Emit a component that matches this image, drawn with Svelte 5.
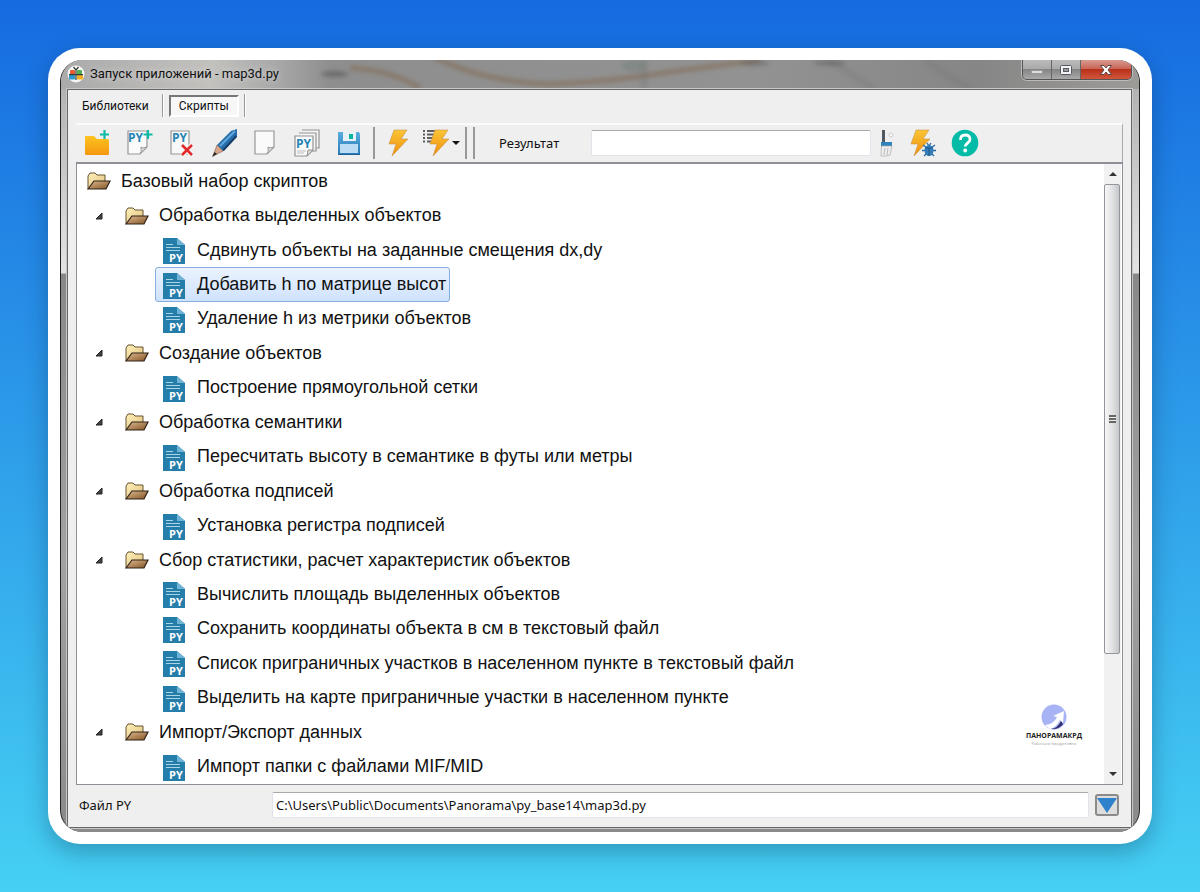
<script lang="ts">
    type Row = { level: number; label: string };

    const rows: Row[] = [
        { level: 0, label: "Базовый набор скриптов" },
        { level: 1, label: "Обработка выделенных объектов" },
        { level: 2, label: "Сдвинуть объекты на заданные смещения dx,dy" },
        { level: 2, label: "Добавить h по матрице высот" },
        { level: 2, label: "Удаление h из метрики объектов" },
        { level: 1, label: "Создание объектов" },
        { level: 2, label: "Построение прямоугольной сетки" },
        { level: 1, label: "Обработка семантики" },
        { level: 2, label: "Пересчитать высоту в семантике в футы или метры" },
        { level: 1, label: "Обработка подписей" },
        { level: 2, label: "Установка регистра подписей" },
        { level: 1, label: "Сбор статистики, расчет характеристик объектов" },
        { level: 2, label: "Вычислить площадь выделенных объектов" },
        { level: 2, label: "Сохранить координаты объекта в см в текстовый файл" },
        { level: 2, label: "Список приграничных участков в населенном пункте в текстовый файл" },
        { level: 2, label: "Выделить на карте приграничные участки в населенном пункте" },
        { level: 1, label: "Импорт/Экспорт данных" },
        { level: 2, label: "Импорт папки с файлами MIF/MID" }
    ];

    let selected = $state(3);
    let tab = $state("scripts");
    let result = $state("");
    let path = $state("C:\\Users\\Public\\Documents\\Panorama\\py_base14\\map3d.py");
</script>

{#snippet bolt()}
    <path d="M9 1h13l-6 9h7L7 27l4-12H4z" fill="url(#boltFill)" stroke="#c9964a" stroke-width=".6" />
{/snippet}

{#snippet page()}
    <path d="M3 2h19v16l-7 7H3z" fill="#fafafa" stroke="#979797" stroke-width="1.2" />
    <path d="M22 18q-5 2-6 0q1 5-1 7z" fill="#ddd" stroke="#979797" />
{/snippet}

<!-- shared gradients -->
<svg class="defs" aria-hidden="true">
    <defs>
        <linearGradient id="boltFill" x1="0" y1="0" x2="0" y2="1"><stop offset="0" stop-color="#fbc536" /><stop offset="1" stop-color="#ef8d0b" /></linearGradient>
        <linearGradient id="folderFill" x1="0" y1="0" x2="0" y2="1"><stop offset="0" stop-color="#fcc421" /><stop offset="1" stop-color="#f5970f" /></linearGradient>
        <linearGradient id="backFill" x1="0" y1="0" x2="1" y2="1"><stop offset="0" stop-color="#fff0bb" /><stop offset="1" stop-color="#dfc17c" /></linearGradient>
        <linearGradient id="flapFill" x1="0" y1="0" x2="1" y2="1"><stop offset="0" stop-color="#dfbb91" /><stop offset="1" stop-color="#835324" /></linearGradient>
        <linearGradient id="diskFill" x1="0" y1="0" x2="0" y2="1"><stop offset="0" stop-color="#5aaee0" /><stop offset="1" stop-color="#2879b4" /></linearGradient>
        <filter id="soft" x="-20%" y="-50%" width="140%" height="200%"><feGaussianBlur stdDeviation="2" /></filter>
    </defs>
</svg>

<main class="desktop">
    <div class="card">
        <div class="window">
            <svg class="glass" viewBox="0 0 1080 29" preserveAspectRatio="none" aria-hidden="true">
                <g filter="url(#soft)">
                    <path d="M290 8q40 2 70 20M372-4q50 26 118 28M490 24q60-2 120-12q60-8 90-12" fill="none" stroke="#86715f" stroke-width="5" opacity=".75" />
                    <path d="M584 0v29M770 0l45 29M865 0l45 29" fill="none" stroke="#707370" stroke-width="8" opacity=".25" />
                    <ellipse cx="274" cy="14" rx="14" ry="3" fill="#555" opacity=".6" />
                    <ellipse cx="695" cy="3" rx="14" ry="3" fill="#555" opacity=".4" />
                    <ellipse cx="770" cy="3" rx="16" ry="3" fill="#555" opacity=".4" />
                    <ellipse cx="574" cy="6" rx="12" ry="6" fill="#5f7770" opacity=".3" />
                </g>
            </svg>
            <header class="titlebar">
                <svg class="app-icon" width="18" height="18" viewBox="0 0 18 18">
                    <circle cx="9" cy="9" r="8.5" fill="#f6f6f4" />
                    <rect x="3" y="5" width="5" height="4.500" rx="1" fill="#e85b31" /><rect x="10" y="5" width="5" height="4.500" rx="1" fill="#52af50" />
                    <rect x="2" y="10" width="6" height="4.500" rx="1" fill="#2e9bd0" /><rect x="10" y="10" width="6" height="4.500" rx="1" fill="#f2ae25" />
                    <path d="M2 9.700h14M9 4v11M6.500 2l2.500 3 2.500-3" fill="none" stroke="#303c38" stroke-width="1.200" />
                </svg>
                <span class="caption">Запуск приложений - map3d.py</span>
                <div class="window-buttons">
                    <button class="sys" aria-label="Свернуть"><svg width="14" height="12"><rect x="1.500" y="6.500" width="11" height="3" fill="#ddd" stroke="#999" /></svg></button>
                    <button class="sys" aria-label="Развернуть"><svg width="14" height="12"><rect x="1.500" y="1.500" width="11" height="9" rx="1" fill="#f3f3f3" stroke="#555a65" /><rect x="4.500" y="4.500" width="5" height="3" fill="#999" stroke="#555a65" /></svg></button>
                    <button class="sys close" aria-label="Закрыть"><svg width="14" height="12" viewBox="0 0 14 12"><path d="M1.500 1.500h3.500l2 2.500 2-2.500h3.500L9 6l3.500 4.500H9L7 8l-2 2.500H1.500L5 6z" fill="#fff" stroke="#5d4848" /></svg></button>
                </div>
            </header>

            <section class="client">
                <nav class="tabs">
                    <button class="tab" class:active={tab === "libs"} onclick={() => (tab = "libs")}>Библиотеки</button>
                    <span class="tab-line"></span>
                    <button class="tab" class:active={tab === "scripts"} onclick={() => (tab = "scripts")}>Скрипты</button>
                    <span class="tab-line"></span>
                </nav>

                <div class="workspace">
                    <div class="toolbar">
                        <button class="tool" aria-label="Новая папка"><svg width="28" height="28" viewBox="0 0 28 28"><path d="M2 8q0-1 1-1h8l3 3h11q1 0 1 1v14q0 1-1 1H3q-1 0-1-1z" fill="url(#folderFill)" /><path d="M21.500 1v9M17 5.500h9" stroke="#0fbaa4" stroke-width="2.200" /></svg></button>
                        <button class="tool" aria-label="Новый скрипт"><svg width="28" height="28" viewBox="0 0 28 28">{@render page()}<text class="py dark" x="3" y="13">PY</text><path d="M23 1v9M18.500 5.500h9" stroke="#0fbaa4" stroke-width="2.200" /></svg></button>
                        <button class="tool" aria-label="Удалить скрипт"><svg width="28" height="28" viewBox="0 0 28 28"><path d="M4 2h18v23H4z" fill="#f8f8f8" stroke="#979797" stroke-width="1.200" /><text class="py dark" x="5" y="13">PY</text><path d="M15 16l10 10M25 16L15 26" stroke="#f8f8f8" stroke-width="5" /><path d="M15 16l10 10M25 16L15 26" stroke="#e22a2c" stroke-width="2.600" /></svg></button>
                        <button class="tool" aria-label="Редактировать"><svg width="28" height="28" viewBox="0 0 28 28"><path d="M28 0v7L14 22l-6-6L22 2z" fill="#276fac" /><path d="M26 2L11 17" stroke="#61a7dd" stroke-width="2" /><path d="M27.500 7L14 21.500" stroke="#183d66" stroke-width="2" /><path d="M8 16l6 6-10 5z" fill="#d6a58b" stroke="#86685a" stroke-width=".7" /><path d="M5.500 23l2.500 2-5 3z" fill="#2c2a2c" /></svg></button>
                        <button class="tool" aria-label="Очистить"><svg width="28" height="28" viewBox="0 0 28 28"><g transform="translate(1 0)">{@render page()}</g></svg></button>
                        <button class="tool" aria-label="Копировать скрипт"><svg width="28" height="28" viewBox="0 0 28 28"><path d="M9 1h17v18h-3M6 4h17v18h-4" fill="#f5f5f5" stroke="#929292" stroke-width="1.200" /><path d="M2 7h18v14l-6 6H2z" fill="#fafafa" stroke="#929292" stroke-width="1.200" /><text class="py dark" x="3" y="19">PY</text><path d="M4 22h9M4 24h7" stroke="#bbb" /><path d="M20 21h-5l-1 6z" fill="#ddd" stroke="#929292" /></svg></button>
                        <button class="tool" aria-label="Сохранить"><svg width="28" height="28" viewBox="0 0 28 28"><path d="M3 3h21l1 2v21H3z" fill="url(#diskFill)" /><path d="M8 3h13v9H8z" fill="#e7f1f7" /><path d="M14 5h4v5h-4z" fill="#08b59c" /><path d="M5 15h18v9H5z" fill="#bcdcf5" /><path d="M3 25.500h22" stroke="#225f95" /></svg></button>
                        <span class="separator"></span>
                        <button class="tool" aria-label="Выполнить"><svg width="28" height="28" viewBox="0 0 28 28">{@render bolt()}</svg></button>
                        <button class="tool" aria-label="Выполнить из списка"><svg width="38" height="28" viewBox="0 0 38 28"><path d="M1 2h2M1 5.500h2M1 9h2M1 12.500h2M5 2h16M5 5.500h14M5 9h10M5 12.500h8" stroke="#5e5e5e" stroke-width="1.800" /><g transform="translate(4 0)">{@render bolt()}</g><path d="M30 12h8l-4 4z" fill="#151515" /></svg></button>
                        <span class="separator"></span><span class="separator"></span>
                        <label class="result-label" for="result">Результат</label>
                        <input id="result" class="field result" bind:value={result} />
                        <button class="tool brush" aria-label="Очистить результат"><svg width="16" height="28" viewBox="0 0 16 28"><path d="M4.500 1v13" stroke="#505860" stroke-width="3" /><path d="M2 13h11v5H2z" fill="#2f82bb" /><path d="M2.500 17h10.500l-2 9q-5 2-9 1z" fill="#eee" stroke="#aaa" stroke-width=".7" /><path d="M6 19l-1 7M9 19l-1 7" stroke="#bbb" /><circle cx="12" cy="6" r="2" fill="#fafafa" stroke="#ccc" /></svg></button>
                        <button class="tool debug" aria-label="Отладка"><svg width="28" height="28" viewBox="0 0 28 28"><g transform="translate(-2 0)">{@render bolt()}</g><path d="M14 16l4 3M26 16l-4 3M13 21.500h14M15 27l3-3M25 27l-3-3M18 14l2 3 2-3" fill="none" stroke="#28689e" stroke-width="1.300" /><ellipse cx="20" cy="21.500" rx="4.500" ry="5.500" fill="#347fba" /><path d="M16 19h8M20 19v8" stroke="#184f7d" stroke-width=".8" /></svg></button>
                        <button class="tool help" aria-label="Справка"><svg width="28" height="28" viewBox="0 0 28 28"><circle cx="14" cy="14" r="13.300" fill="#04bba7" /><path d="M9.500 11q0-5 4.700-5t4.800 4.200c0 4-4.800 3.600-4.800 7.300" fill="none" stroke="#fff" stroke-width="2.800" /><circle cx="14.200" cy="21.500" r="1.900" fill="#fff" /></svg></button>
                    </div>

                    <div class="tree-box">
                        <ul class="tree">
                            {#each rows as row, i}
                                <li class="row level{row.level}">
                                    {#if row.level === 1}
                                        <svg class="arrow" width="8" height="8"><path d="M7 1v6H1z" fill="#444" stroke="#222" /></svg>
                                    {/if}
                                    <button class="node" class:selected={selected === i} onclick={() => (selected = i)}>
                                        {#if row.level < 2}
                                            <svg width="26" height="20" viewBox="0 0 26 20"><path d="M2 18V5l2-3h5l2 2h8v6" fill="url(#backFill)" stroke="#665230" /><path d="M2 18l6-8h16l-4 8H2z" fill="url(#flapFill)" stroke="#2f2219" stroke-width="1.200" /></svg>
                                        {:else}
                                            <svg width="26" height="28" viewBox="1 -2 26 28"><path d="M2 0h14l8 7v19H2z" fill="#257da9" /><path d="M16 0l8 7h-8z" fill="#70b4d5" /><path d="M5 6.500h7M5 9.500h14M5 12.500h14" stroke="#a9d4e5" stroke-width="1.200" /><text class="py light" x="8" y="24">PY</text></svg>
                                        {/if}
                                        <span>{row.label}</span>
                                    </button>
                                </li>
                            {/each}
                        </ul>
                        <div class="scrollbar">
                            <svg width="17" height="20"><path d="M5 12l4-4 4 4z" fill="#333" /></svg>
                            <div class="track"><div class="thumb"><span class="grip"></span></div></div>
                            <svg width="17" height="20"><path d="M5 8h8l-4 4z" fill="#333" /></svg>
                        </div>
                        <div class="watermark">
                            <svg width="26" height="26" viewBox="0 0 26 26"><circle cx="13" cy="13" r="12.500" fill="#a8b3f6" /><path d="M4 21q9-1 12-8l-4-1 11-5-1 12-3-3q-4 8-10 9z" fill="#fff" /><path d="M10 25q7-1 10-8l2 3q-4 6-12 5z" fill="#33306f" /></svg>
                            <strong>ПАНОРАМАКРД</strong>
                            <small>Работаем продуктивно</small>
                        </div>
                    </div>

                    <footer class="file-row">
                        <label for="path">Файл PY</label>
                        <input id="path" class="field" bind:value={path} />
                        <button class="choose" aria-label="Выбрать файл"><svg width="20" height="16"><path d="M0 1h20L10 16z" fill="#2d82cb" /></svg></button>
                    </footer>
                </div>
            </section>
        </div>
    </div>
</main>

<style>
    :global(body) {
        margin: 0;
    }

    * {
        box-sizing: border-box;
    }

    button, input {
        font: inherit;
        color: inherit;
    }

    button {
        padding: 0;
        border: 0;
        background: none;
    }

    svg {
        display: block;
        flex: none;
    }

    .defs {
        position: absolute;
        width: 0;
        height: 0;
    }

    .desktop {
        min-height: 100vh;
        padding: 48px;
        display: flex;
        background: linear-gradient(#166be0, #46d0f3);
        font: 13px "Noto Sans", sans-serif;
        color: #111;
    }

    .card {
        flex: 1;
        min-width: 0;
        display: flex;
        padding: 12px;
        border-radius: 32px;
        background: #fff;
        box-shadow: 0 8px 24px rgba(0, 30, 60, 0.3);
    }

    .window {
        position: relative;
        flex: 1;
        min-width: 0;
        display: flex;
        flex-direction: column;
        padding: 0 7px 4px 6px;
        border-left: 1px solid #222;
        border-right: 1px solid #222;
        border-radius: 22px;
        overflow: hidden;
        background: linear-gradient(#aaa, #bbb 60px, #e4e4e4 213px, #888 214px, #a2a2a2 500px, #8a8a8a);
    }

    .glass {
        position: absolute;
        top: 0;
        left: 0;
        width: 100%;
        height: 29px;
        background: linear-gradient(90deg, #aaa, #c2c1be 14%, #a8a8a8 20%, #8e8e8e 25%, #929292 65%, #868686 85%, #9d9b98);
    }

    .titlebar {
        position: relative;
        height: 29px;
        display: flex;
        align-items: center;
        padding-bottom: 2px;
    }

    .app-icon {
        margin-right: 5px;
    }

    .caption {
        flex: 1;
        font-family: Roboto, sans-serif;
        text-shadow: 0 0 6px #ddd;
    }

    .window-buttons {
        align-self: flex-start;
        display: flex;
        height: 20px;
        border: 1px solid #555;
        border-top: 0;
        border-radius: 0 0 5px 5px;
        overflow: hidden;
        box-shadow: 0 0 0 1px #bbb;
    }

    .sys {
        width: 29px;
        display: grid;
        place-items: center;
        border-right: 1px solid #666;
        background: linear-gradient(#bbb, #aaa 45%, #858585 50%, #aaa);
    }

    .close {
        width: 50px;
        border: 0;
        background: linear-gradient(#d79b91, #cb6557 45%, #b9301b 50%, #d2563d);
    }

    .client {
        position: relative;
        flex: 1;
        display: flex;
        flex-direction: column;
        border: 1px solid #666;
        outline: 1px solid #c7c7c7;
        background: #efefef;
    }

    .tabs {
        height: 33px;
        display: flex;
        align-items: center;
        gap: 5px;
        padding: 0 5px 2px 6px;
        font: 12px Roboto, sans-serif;
    }

    .tab {
        height: 22px;
        padding: 0 8px;
    }

    .tab.active {
        border: 2px solid;
        border-color: #777 #fff #fff #777;
        background: #f7f7f7;
    }

    .tab-line {
        width: 2px;
        height: 23px;
        border-left: 1px solid #999;
        background: #fff;
    }

    .workspace {
        flex: 1;
        display: flex;
        flex-direction: column;
        padding: 0 8px;
    }

    .toolbar {
        height: 39px;
        display: flex;
        align-items: center;
        padding-bottom: 2px;
        border-top: 2px solid #fbfbfb;
        border-right: 1px solid #aaa;
    }

    .tool {
        width: 42px;
        height: 32px;
        display: grid;
        place-items: center;
        flex: none;
    }

    .separator {
        width: 2px;
        height: 32px;
        margin: 0 3px;
        background: #999;
    }

    .result-label {
        width: 92px;
        margin-left: 21px;
    }

    .field {
        height: 26px;
        padding: 0 3px;
        border: 1px solid #e0e3ea;
        border-top-color: #aaa;
        border-radius: 2px;
        background: #fff;
        outline: 0;
    }

    .result {
        width: 280px;
    }

    .brush {
        width: 32px;
    }

    .debug {
        width: 40px;
    }

    .help {
        width: 44px;
    }

    .py {
        font: bold 12px "Open Sans", sans-serif;
    }

    .dark {
        fill: #2585b4;
    }

    .light {
        font-size: 11px;
        fill: #fff;
    }

    .tree-box {
        position: relative;
        flex: 1;
        display: flex;
        border: 1px solid #8d9197;
        border-top-width: 2px;
        background: #fff;
    }

    .tree {
        flex: 1;
        display: flex;
        flex-direction: column;
        margin: 0;
        padding: 0;
        list-style: none;
        font: 18px "Liberation Sans", sans-serif;
    }

    .row {
        flex: 1;
        display: flex;
        align-items: stretch;
        padding-left: 2px;
    }

    .level1 {
        padding-left: 18px;
    }

    .level2 {
        padding-left: 78px;
    }

    .arrow {
        align-self: center;
        margin-right: 14px;
    }

    .node {
        display: flex;
        align-items: center;
        gap: 9px;
        padding: 0 3px 0 6px;
        border: 1px solid transparent;
        border-radius: 3px;
        white-space: nowrap;
    }

    .node.selected {
        border-color: #84acdd;
        background: linear-gradient(#ebf3fe, #cfe2fe);
    }

    .scrollbar {
        width: 17px;
        margin-right: 1px;
        display: flex;
        flex-direction: column;
        background: #f1f1f1;
    }

    .track {
        flex: 1;
    }

    .thumb {
        height: 81%;
        width: 16px;
        display: grid;
        place-items: center;
        border: 1px solid #92959b;
        border-radius: 2px;
        background: linear-gradient(90deg, #f7f7f7, #e3e3e5 50%, #c6c7ca);
    }

    .grip {
        width: 7px;
        height: 8px;
        background: repeating-linear-gradient(#666 0 2px, #eee 2px 3px);
    }

    .watermark {
        position: absolute;
        right: 40px;
        bottom: 38px;
        display: flex;
        flex-direction: column;
        align-items: center;
        font: 5px "Open Sans", sans-serif;
        color: #999;
    }

    .watermark strong {
        font-size: 7px;
        line-height: 11px;
        color: #222;
    }

    .watermark small {
        font-size: 4px;
        line-height: 5px;
    }

    .file-row {
        height: 42px;
        display: flex;
        align-items: center;
        padding: 0 4px 2px 3px;
    }

    .file-row label {
        width: 193px;
    }

    .file-row .field {
        flex: 1;
        min-width: 0;
    }

    .choose {
        width: 24px;
        height: 22px;
        margin-left: 6px;
        display: grid;
        place-items: center;
        border: 2px solid #8b8b8b;
        border-radius: 3px;
        background: #ddd;
    }
</style>
